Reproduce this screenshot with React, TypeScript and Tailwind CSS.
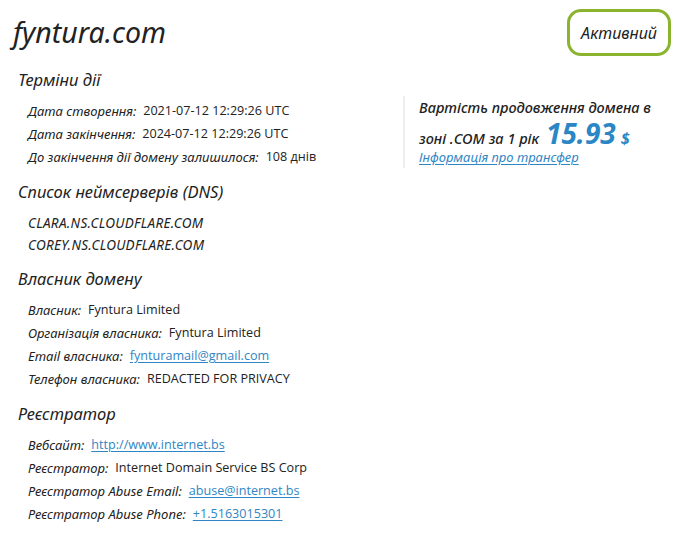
import React from "react";

const labelFont = "font-['Noto_Sans',sans-serif] italic";
const valueFont = "font-['Open_Sans',sans-serif]";

function Row({ label, children }: { label: string; children: React.ReactNode }) {
  return (
    <div className="flex items-center h-[23px] text-[#222]">
      <span className={`${labelFont} text-[13px]`}>{label}:</span>
      <span className={`${valueFont} text-[12.6px] ml-[7px]`}>{children}</span>
    </div>
  );
}

function Link({ children }: { children: React.ReactNode }) {
  return <a className="text-[#2f86c4] underline underline-offset-2">{children}</a>;
}

function Heading({ children }: { children: React.ReactNode }) {
  return (
    <h2 className={`${labelFont} text-[16.5px] text-[#222] pl-[18px] h-[24px] flex items-center`}>{children}</h2>
  );
}

export default function App() {
  return (
    <div className="w-[677px] h-[533px] bg-white relative overflow-hidden">
      <div className="flex justify-between items-start pt-[9px] pr-[6px]">
        <h1 className={`${labelFont} text-[28.5px] text-[#222] pl-[13px] pt-[6px] leading-[34px]`}>fyntura.com</h1>
        <div className={`${labelFont} border-[3px] border-[#8bb42e] rounded-[14px] w-[104px] h-[47px] flex items-center justify-center text-[16px] text-[#222]`}>
          Активний
        </div>
      </div>
      <div className="flex mt-[12px]">
        <div className="w-[403px]">
          <Heading>Терміни дії</Heading>
          <div className="pl-[28px] pt-[8px]">
            <Row label="Дата створення">2021-07-12 12:29:26 UTC</Row>
            <Row label="Дата закінчення">2024-07-12 12:29:26 UTC</Row>
            <Row label="До закінчення дії домену залишилося">108 днів</Row>
          </div>
          <div className="mt-[11px]">
            <Heading>Список неймсерверів (DNS)</Heading>
          </div>
          <div className={`pl-[28px] pt-[8px] ${labelFont} text-[13.5px] tracking-[0.3px] text-[#222]`}>
            <div className="h-[22px] flex items-center">CLARA.NS.CLOUDFLARE.COM</div>
            <div className="h-[22px] flex items-center">COREY.NS.CLOUDFLARE.COM</div>
          </div>
          <div className="mt-[11px]">
            <Heading>Власник домену</Heading>
          </div>
          <div className="pl-[28px] pt-[8px]">
            <Row label="Власник">Fyntura Limited</Row>
            <Row label="Організація власника">Fyntura Limited</Row>
            <Row label="Email власника"><Link>fynturamail@gmail.com</Link></Row>
            <Row label="Телефон власника">REDACTED FOR PRIVACY</Row>
          </div>
          <div className="mt-[11px]">
            <Heading>Реєстратор</Heading>
          </div>
          <div className="pl-[28px] pt-[8px]">
            <Row label="Вебсайт"><Link>http://www.internet.bs</Link></Row>
            <Row label="Реєстратор">Internet Domain Service BS Corp</Row>
            <Row label="Реєстратор Abuse Email"><Link>abuse@internet.bs</Link></Row>
            <Row label="Реєстратор Abuse Phone"><Link>+1.5163015301</Link></Row>
          </div>
        </div>
        <div className="mt-[28px] h-[72px] border-l-2 border-[#eeeeee] pl-[14px]">
          <div className={`${labelFont} text-[14.5px] text-[#222] leading-[23px] font-medium`}>
            Вартість продовження домена в
          </div>
          <div className={`${labelFont} text-[14.5px] text-[#222] flex items-baseline h-[27px] font-medium`}>
            зоні .COM за 1 рік
            <span className="text-[28px] font-bold text-[#2a86c5] ml-[7px] leading-none">15.93</span>
            <span className="text-[16px] font-bold text-[#2a86c5] ml-[5px]">$</span>
          </div>
          <div className={`${labelFont} text-[13px] mt-[2px]`}>
            <Link>Інформація про трансфер</Link>
          </div>
        </div>
      </div>
    </div>
  );
}
